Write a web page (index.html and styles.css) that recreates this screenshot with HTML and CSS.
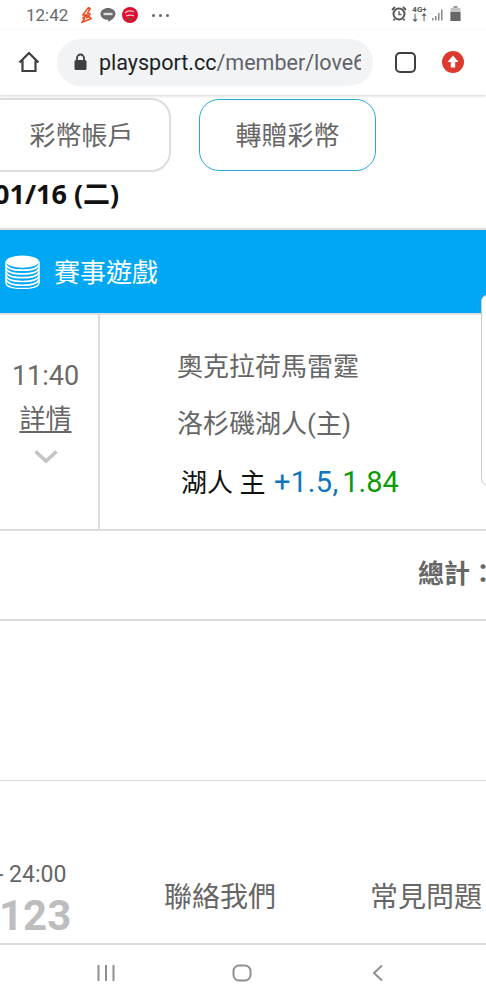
FILE: index.html
```
<!DOCTYPE html>
<html lang="zh-Hant">
<head>
<meta charset="utf-8">
<title>playsport.cc</title>
<link rel="stylesheet" href="styles.css">
</head>
<body>
<div class="phone">
  <div class="status">
    <div class="status-left">
      <span class="clock">12:42</span>
      <svg class="ic-bolt" width="13" height="18" viewBox="0 0 14 18"><path d="M9 1 3 9h5L3 12l2 1-3 4 10-4-2-2-3 1 4-4-3-1 3-5z" fill="none" stroke="#f0471c" stroke-width="1.6" stroke-linejoin="round"/></svg>
      <svg class="ic-line" width="16" height="16" viewBox="0 0 16 16"><path d="M8 1c4 0 7.500 2.500 7.500 6 0 3-3.500 6-7.500 8 .5-1 .5-2 .3-2.200C4 12.800.5 10.500.5 7 .5 3.500 4 1 8 1z" fill="#6b6b6b"/><rect x="3.500" y="5.800" width="9" height="2.400" fill="#ddd"/></svg>
      <svg class="ic-red" width="16" height="16" viewBox="0 0 16 16"><circle cx="8" cy="8" r="8" fill="#dd1030"/><path d="M3 6c2-2 5-3 9-1M4 9c3-1 6-1 8 0" stroke="#f7c4cc" stroke-width="1.300" fill="none"/><rect x="6.500" y="11" width="3" height="2.500" fill="#6a5a20"/></svg>
      <span class="dots"><i></i><i></i><i></i></span>
    </div>
    <div class="status-right">
      <svg width="16" height="15" viewBox="0 0 16 15"><circle cx="8" cy="8" r="5.500" fill="none" stroke="#555" stroke-width="2"/><path d="M8 5v3.500h2.500" stroke="#555" stroke-width="1.300" fill="none"/><path d="M1 4l3-3M15 4l-3-3M3.500 13 2.500 14.500M12.500 13l1 1.500" stroke="#555" stroke-width="1.800"/></svg>
      <span class="net"><span class="net-label">4G+</span><span class="net-arrows">↓↑</span></span>
      <svg width="13" height="14" viewBox="0 0 13 14"><rect x="0" y="11" width="1.500" height="2.500" fill="#888"/><rect x="3" y="9" width="1.500" height="4.500" fill="#888"/><rect x="6" y="6" width="1.500" height="7.500" fill="#888"/><rect x="9" y="2.500" width="1.500" height="11" fill="#888"/></svg>
      <svg width="11" height="15" viewBox="0 0 11 15"><rect x="3.500" y="0" width="4" height="2" fill="#999"/><rect x=".5" y="2" width="10" height="13" fill="#c4c4c4"/><rect x=".5" y="6" width="10" height="9" fill="#666"/></svg>
    </div>
  </div>

  <div class="toolbar">
    <svg class="tb-home" width="24" height="24" viewBox="0 0 24 24"><path d="M2.500 12.500 12 3l9.500 9.500M5.500 10.500V21h13V10.500" fill="none" stroke="#3c4043" stroke-width="2.200" stroke-linejoin="miter"/></svg>
    <div class="omnibox">
      <svg width="15" height="18" viewBox="0 0 15 18"><path d="M4 8V5a3.500 3.500 0 0 1 7 0v3" fill="none" stroke="#3c4043" stroke-width="1.800"/><rect x="1.500" y="7" width="12" height="10" rx="1.500" fill="#3c4043"/></svg>
      <div class="url"><span class="url-host">playsport.cc</span>/member/love66</div>
    </div>
    <div class="tab-square"></div>
    <svg class="tb-up" width="22" height="22" viewBox="0 0 22 22"><circle cx="11" cy="11" r="11" fill="#dc3a2c"/><path d="M11 4.500 5.500 11h3.300v5.500h4.400V11h3.300z" fill="#fff"/></svg>
  </div>

  <div class="tabs">
    <a class="tab tab-account">彩幣帳戶</a>
    <a class="tab tab-gift">轉贈彩幣</a>
  </div>

  <div class="date">01/16 (二)</div>

  <div class="banner">
    <svg class="coins" width="35" height="34" viewBox="0 0 37 36"><ellipse cx="18.500" cy="7" rx="17.500" ry="6.500" fill="#fff"/><path d="M1 10c1 4 8 6 17.500 6S35 14 36 10M1 14c1 4 8 6 17.500 6S35 18 36 14M1 18c1 4 8 6 17.500 6S35 22 36 18M1 22c1 4 8 6 17.500 6S35 26 36 22M1 26c1 4 8 6 17.500 6S35 30 36 26" fill="none" stroke="#fff" stroke-width="1.700"/><path d="M1 7v23c1 3.500 8 5.500 17.500 5.500S35 33.500 36 30V7" fill="none" stroke="#fff" stroke-width="1.500"/></svg>
    <span class="banner-title">賽事遊戲</span>
  </div>

  <div class="match">
    <div class="match-time">
      <span class="time">11:40</span>
      <span class="detail">詳情</span>
      <svg class="chev" width="24" height="14" viewBox="0 0 24 14"><path d="M1.500 1.500 12 11 22.500 1.500" fill="none" stroke="#c4c4c4" stroke-width="3.600"/></svg>
    </div>
    <div class="match-info">
      <div class="team">奧克拉荷馬雷霆</div>
      <div class="team team-home">洛杉磯湖人(主)</div>
      <div class="pick">湖人 主 <span class="odds-blue">+1.5,</span> <span class="odds-green">1.84</span></div>
    </div>
  </div>

  <div class="total"><span class="total-label">總計：</span></div>

  <div class="blank"></div>

  <div class="footer">
    <div class="hours">
      <span class="hours-time">- 24:00</span>
      <span class="hours-num">123</span>
    </div>
    <span class="flink flink-contact">聯絡我們</span>
    <span class="flink flink-faq">常見問題</span>
  </div>

  <div class="navbar">
    <svg width="20" height="18" viewBox="0 0 20 18"><path d="M2.500 1v16M10 1v16M17.500 1v16" stroke="#8f8f8f" stroke-width="2"/></svg>
    <svg class="nav-home" width="20" height="18" viewBox="0 0 20 18"><rect x="1.500" y="1.500" width="17" height="15" rx="5.500" fill="none" stroke="#8f8f8f" stroke-width="2"/></svg>
    <svg class="nav-back" width="12" height="18" viewBox="0 0 12 18"><path d="M10 1.500 2 9l8 7.500" fill="none" stroke="#8f8f8f" stroke-width="2"/></svg>
  </div>

  <div class="side-panel"></div>
</div>
</body>
</html>
```

FILE: styles.css
```
* { box-sizing: border-box; }
html, body { margin: 0; padding: 0; background: #fff; }
.phone {
  position: relative;
  width: 486px;
  height: 1000px;
  overflow: hidden;
  background: #fff;
  color: #666;
  font-family: Roboto, "Noto Sans CJK TC", sans-serif;
}
.status {
  height: 30px;
  display: flex;
  justify-content: space-between;
  align-items: center;
  padding: 0 25px 0 26px;
}
.status-left { display: flex; align-items: center; }
.clock { font-size: 17px; color: #6a6a6a; width: 54px; }
.ic-line { margin-left: 7px; }
.ic-red { margin-left: 6px; }
.dots { display: flex; gap: 4px; margin-left: 14px; }
.dots i { width: 3px; height: 3px; border-radius: 50%; background: #666; }
.status-right { display: flex; align-items: center; gap: 5px; padding-bottom: 3px; }
.net { display: flex; flex-direction: column; align-items: center; line-height: 8px; width: 15px; color: #555; }
.net-label { font-size: 8px; font-weight: 700; }
.net-arrows { font-size: 9px; font-weight: 700; }
.toolbar {
  height: 65px;
  display: flex;
  align-items: center;
  padding: 0 21px 1px 17px;
  background: #fff;
  box-shadow: 0 1px 3px rgba(0,0,0,.18);
  position: relative;
}
.omnibox {
  margin-left: 16px;
  width: 316px;
  height: 47px;
  border-radius: 24px;
  background: #f1f3f4;
  display: flex;
  align-items: center;
  padding: 0 0 0 16px;
  overflow: hidden;
}
.url {
  margin-left: 11px;
  font-size: 21.500px;
  color: #5f6368;
  white-space: nowrap;
  overflow: hidden;
  width: 262px;
}
.url-host { color: #202124; }
.tab-square {
  margin-left: 22px;
  width: 21px;
  height: 21px;
  border: 2.400px solid #3c4043;
  border-radius: 5px;
}
.tb-up { margin-left: 26px; }
.tabs {
  height: 81px;
  display: flex;
  gap: 28px;
  padding-top: 3px;
  margin-left: -20px;
}
.tab {
  height: 74px;
  border-radius: 20px;
  display: flex;
  align-items: center;
  justify-content: center;
  font-size: 26px;
  color: #666;
  background: #fff;
  padding-bottom: 4px;
}
.tab-account { width: 191px; border: 2px solid #ddd; padding-left: 12px; }
.tab-gift { width: 177px; height: 72px; margin-top: 1px; border: 1px solid #2aa8e0; }
.date {
  height: 54px;
  margin-left: -6px;
  font-size: 27px;
  line-height: 36px;
  font-weight: 700;
  color: #111;
  border-bottom: 2px solid #ddd;
  font-family: "Open Sans", "Noto Sans CJK TC", sans-serif;
}
.banner {
  height: 83px;
  background: #00a7f5;
  display: flex;
  align-items: center;
  padding-left: 5px;
  color: #fff;
}
.banner-title { margin-left: 14px; font-size: 26px; padding-bottom: 2px; }
.match {
  height: 218px;
  display: flex;
  border-top: 2px solid #e0e0e0;
  border-bottom: 2px solid #ddd;
}
.match-time {
  width: 100px;
  border-right: 2px solid #ddd;
  display: flex;
  flex-direction: column;
  align-items: center;
  padding: 41px 7px 0 0;
}
.time { font-size: 27px; line-height: 40px; color: #6a6a6a; }
.detail { font-size: 26px; line-height: 36px; margin-top: 5px; text-decoration: underline; text-underline-offset: 3px; color: #666; }
.chev { margin-top: 13px; }
.match-info { padding: 34px 0 0 77px; }
.team { font-size: 26px; line-height: 36px; margin-bottom: 21px; color: #666; white-space: nowrap; }
.team-home { margin-bottom: 22px; }
.pick { font-size: 26px; line-height: 36px; color: #111; margin-left: 4px; white-space: nowrap; }
.odds-blue { color: #0f75bd; font-size: 29px; letter-spacing: .5px; margin-left: 2px; }
.odds-green { color: #0b9a0b; font-size: 29px; margin-left: -3px; }
.total {
  height: 92px;
  border-bottom: 2px solid #ddd;
  display: flex;
  align-items: center;
  justify-content: flex-end;
  margin-top: -2px;
  padding-bottom: 6px;
}
.total-label { font-size: 26px; font-weight: 700; color: #666; margin-right: -10px; }
.blank { height: 160px; border-bottom: 1px solid #ddd; }
.footer {
  height: 164px;
  border-bottom: 2px solid #ddd;
  display: flex;
  align-items: flex-start;
}
.hours { width: 157px; display: flex; flex-direction: column; padding-top: 78px; margin-left: -3px; }
.hours-time { font-size: 23px; line-height: 32px; color: #666; white-space: nowrap; }
.hours-num { font-size: 42px; line-height: 44px; margin-top: 3px; font-weight: 700; color: #bdbdbd; margin-left: 2px; }
.flink { font-size: 28px; line-height: 40px; margin-top: 97px; color: #666; white-space: nowrap; }
.flink-contact { margin-left: 10px; }
.flink-faq { margin-left: 94px; }
.navbar {
  height: 56px;
  display: flex;
  align-items: center;
  padding-left: 96px;
}
.nav-home { margin-left: 116px; }
.nav-back { margin-left: 120px; }
.side-panel {
  position: absolute;
  left: 481px;
  top: 295px;
  width: 30px;
  height: 190px;
  border: 1px solid #ccc;
  border-radius: 6px;
  background: #fff;
}
```
